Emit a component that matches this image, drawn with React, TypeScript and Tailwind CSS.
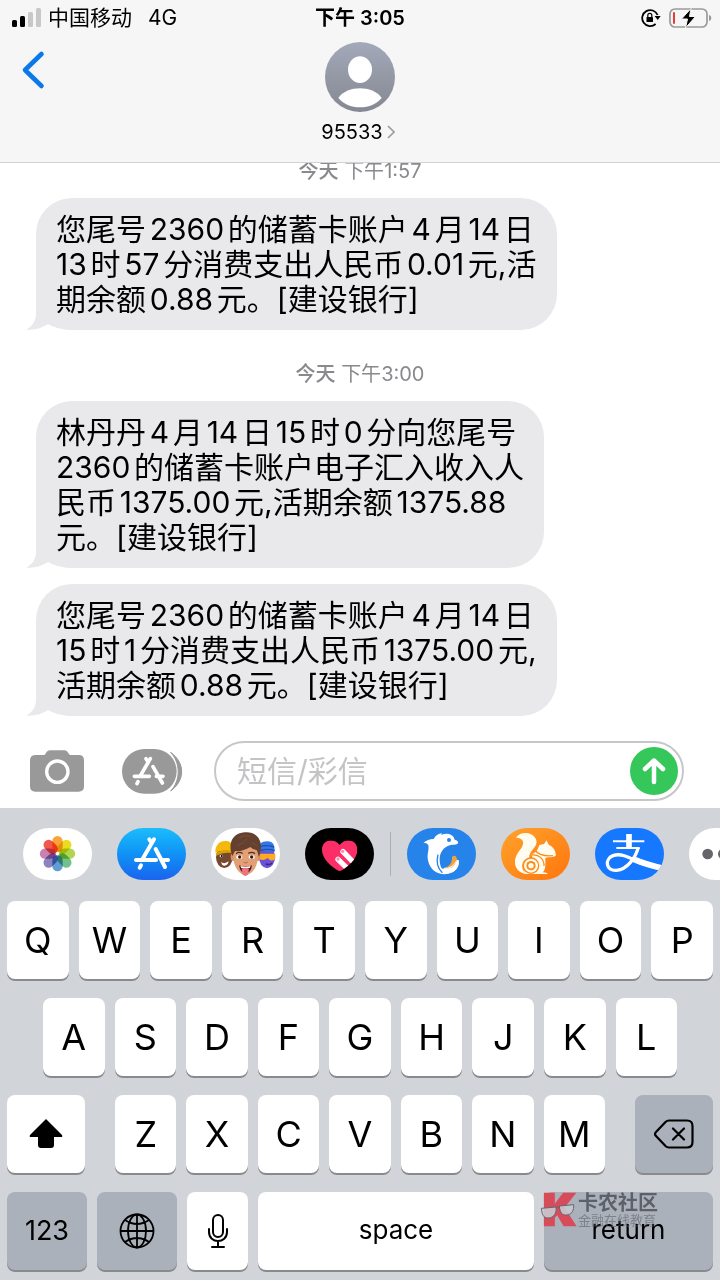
import { ReactNode } from "react";
import clsx from "clsx";

const messages = [
    {
        time: "1:57",
        bubbles: ["您尾号2360的储蓄卡账户4月14日\n13时57分消费支出人民币0.01元,活\n期余额0.88元。[建设银行]"],
    },
    {
        time: "3:00",
        bubbles: [
            "林丹丹4月14日15时0分向您尾号\n2360的储蓄卡账户电子汇入收入人\n民币1375.00元,活期余额1375.88\n元。[建设银行]",
            "您尾号2360的储蓄卡账户4月14日\n15时1分消费支出人民币1375.00元,\n活期余额0.88元。[建设银行]",
        ],
    },
];

const petals = ["#f7981d", "#e8d800", "#a5cf3a", "#5fb87a", "#4a8fd0", "#7a72b8", "#c070a8", "#ee4136"];

function StatusBar() {
    return (
        <div className="grid grid-cols-3 items-center h-9 px-3 text-xl leading-9">
            <div className="flex items-center whitespace-nowrap text-[21px]">
                <svg className="w-[30px] h-5 mr-1.5" viewBox="0 0 30 20" aria-hidden="true">
                    <rect x="0" y="12" width="5" height="7" rx="1.5" />
                    <rect x="8" y="8" width="5" height="11" rx="1.5" />
                    <rect x="16" y="4" width="5" height="15" rx="1.5" fill="#c8c8c8" />
                    <rect x="24" y="0" width="5" height="19" rx="1.5" fill="#c8c8c8" />
                </svg>
                <span>中国移动</span>
                <span className="ml-4">4G</span>
            </div>
            <div className="text-center font-semibold">下午 3:05</div>
            <div className="flex items-center justify-end gap-2">
                <svg className="w-5 h-5" viewBox="0 0 20 20" fill="none" stroke="#000" strokeWidth="1.8" aria-hidden="true">
                    <path d="M16.6 7A8 8 0 1 0 14.6 16" />
                    <path d="M13.6 8h6l-2.800 4z" fill="#000" stroke="none" />
                    <rect x="5.5" y="9" width="6.5" height="5" rx="0.6" fill="#000" stroke="none" />
                    <path d="M6.800 9V7.400a2 2 0 0 1 4 0V9" strokeWidth="1.200" />
                </svg>
                <svg className="w-[43px] h-5 -mr-1" viewBox="0 0 43 20" aria-hidden="true">
                    <rect x="1" y="1" width="37" height="18" rx="5" fill="none" stroke="#9a9a9c" strokeWidth="1.7" />
                    <rect x="4" y="4" width="2" height="12" rx="1" fill="#ea3b34" />
                    <path d="M40 7c3 .5 3 5.500 0 6z" fill="#9a9a9c" />
                    <path d="M22 0.500 12.500 11h6L16.500 20 26.500 8.500h-6z" fill="#000" stroke="#f6f6f6" strokeWidth="1" />
                </svg>
            </div>
        </div>
    );
}

function Header() {
    return (
        <header className="relative z-10 bg-[#f6f6f6] border-b border-[#d2d2d4]">
            <StatusBar />
            <div className="grid grid-cols-3 items-start h-[126px] px-5 pt-1.5">
                <button type="button" aria-label="Back" className="w-10 pt-2">
                    <svg className="w-7 h-10" viewBox="0 0 28 40" fill="none" stroke="#0b79ea" strokeWidth="4.600" strokeLinecap="round" strokeLinejoin="round">
                        <path d="M21.500 4 5 20 21.500 36" />
                    </svg>
                </button>
                <button type="button" className="flex flex-col items-center">
                    <svg className="w-[70px] h-[70px]" viewBox="0 0 210 210" aria-hidden="true">
                        <defs>
                            <linearGradient id="avatar" x1="0" y1="0" x2="0" y2="1">
                                <stop offset="0" stopColor="#a3a9b9" />
                                <stop offset="1" stopColor="#858892" />
                            </linearGradient>
                        </defs>
                        <circle cx="105" cy="105" r="105" fill="url(#avatar)" />
                        <ellipse cx="105" cy="83" rx="36" ry="40" fill="#fff" />
                        <path d="M40 168C54 148 80 139 105 139s51 9 65 29c-15 18-38 28-65 28s-50-10-65-28z" fill="#fff" />
                    </svg>
                    <span className="flex items-center gap-1 mt-2 pr-1 text-xl leading-6">
                        95533
                        <svg className="w-2 h-4" viewBox="0 0 8 16" fill="none" stroke="#9a9ba3" strokeWidth="1.600">
                            <path d="M1 2l6 6-6 6" />
                        </svg>
                    </span>
                </button>
            </div>
        </header>
    );
}

function Bubble({ text }: { text: string }) {
    return (
        <div className="relative ml-9 w-fit rounded-[36px] bg-[#e9e9eb] px-5 pt-[14px] pb-[13px] text-3xl leading-[35px] whitespace-pre [text-autospace:normal]">
            <svg className="absolute -left-2.5 bottom-0 w-12 h-10" viewBox="0 0 48 40" fill="#e9e9eb" aria-hidden="true">
                <path d="M10 0V24C10 31 6 37 0 39.500 8 40.500 16 38 22 34Q30 39 44 40H48V0z" />
            </svg>
            <p className="relative">{text}</p>
        </div>
    );
}

function Composer() {
    return (
        <form className="flex items-center pl-[30px] pr-9 pt-6 pb-[7px]" onSubmit={(e) => e.preventDefault()}>
            <button type="button" aria-label="Camera" className="shrink-0">
                <svg className="w-[54px] h-[42px]" viewBox="0 0 162 126">
                    <path d="M18 15H42C48 15 48 1 60 1H104C114 1 115 15 122 15H146Q162 15 162 31V109Q162 125 146 125H16Q0 125 0 109V31Q0 15 18 15z" fill="#999" />
                    <circle cx="82" cy="65" r="32" fill="none" stroke="#fff" strokeWidth="10" />
                </svg>
            </button>
            <button type="button" aria-label="Apps" className="shrink-0 ml-[38px]">
                <svg className="w-[62px] h-[45px]" viewBox="0 0 186 135">
                    <rect x="0" y="0" width="164" height="134" rx="67" fill="#999" />
                    <path d="M146 10C190 42 190 94 146 126C176 94 176 42 146 10z" fill="#999" stroke="#999" strokeWidth="3" />
                    <g fill="none" stroke="#fff" strokeWidth="11" strokeLinecap="round">
                        <path d="M85 29 54 82M72 29l6 9M93 53l28 49M37 82h45M103 82h20M48 98l-3 6" />
                    </g>
                </svg>
            </button>
            <div className="flex flex-1 min-w-0 items-center ml-[30px] h-[60px] rounded-full border-2 border-[#c7c7c9] pl-[21px] pr-1">
                <input
                    type="text"
                    aria-label="短信/彩信"
                    placeholder="短信/彩信"
                    className="flex-1 min-w-0 bg-transparent text-3xl leading-9 outline-none placeholder:text-[#c4c4c6]"
                />
                <button type="submit" aria-label="Send" className="flex shrink-0 items-center justify-center w-12 h-12 rounded-full bg-[#35c759]">
                    <svg className="w-6 h-7" viewBox="0 0 24 28" fill="none" stroke="#fff" strokeWidth="4.500" strokeLinecap="round" strokeLinejoin="round">
                        <path d="M12 25V3.500M3 12l9-8.500 9 8.500" />
                    </svg>
                </button>
            </div>
        </form>
    );
}

function AppIcon({ label, className, children }: { label: string; className: string; children: ReactNode }) {
    return (
        <button type="button" aria-label={label} className={clsx("shrink-0 w-[69px] h-[52px] rounded-[26px] overflow-hidden", className)}>
            <svg className="w-full h-full" viewBox="0 0 207 156">{children}</svg>
        </button>
    );
}

function AppStrip() {
    return (
        <div className="flex items-center gap-[25px] pl-[23px] pt-5 pb-[21px] overflow-hidden">
            <AppIcon label="Photos" className="bg-white">
                {petals.map((color, i) => (
                    <rect key={color} x="88" y="24" width="31" height="48" rx="15.500" fill={color} opacity="0.88" className="mix-blend-multiply" transform={`rotate(${i * 45} 103.500 77)`} />
                ))}
            </AppIcon>
            <AppIcon label="App Store" className="bg-linear-to-b from-[#1cbdfb] to-[#1b63ee]">
                <g fill="none" stroke="#fff" strokeWidth="12" strokeLinecap="round">
                    <path d="M111 34 75 96M97 34l8 11M116 63l28 54M57 96h60M136 96h17M72 112l-4 7" />
                </g>
            </AppIcon>
            <AppIcon label="Memoji" className="bg-white">
                <ellipse cx="40" cy="88" rx="25" ry="32" fill="#75482f" />
                <path d="M13 73C12 52 26 37 46 39c16 1 23 15 22 31-20-3-36-3-55 3z" fill="#f4b80e" />
                <path d="M14 75q24-13 53-6v7q-30-5-51 7z" fill="#dda000" />
                <ellipse cx="31" cy="84" rx="5" ry="4" fill="#fff" /><circle cx="32" cy="84" r="3" />
                <path d="M30 103q12 6 23-3-3 14-14 13-7-1-9-10z" fill="#fff" />
                <ellipse cx="168" cy="88" rx="24" ry="33" fill="#6d51d4" />
                <path d="M143 67c-2-18 8-27 26-27s24 14 21 32z" fill="#3378e8" />
                <path d="M145 57q20-8 44 0M148 68q20-8 43 0" fill="none" stroke="#214eb2" strokeWidth="4" />
                <path d="M144 77h49v13q-5 10-15 7l-9-7q-11 11-25 2z" fill="#ffab22" />
                <path d="M164 108q12 4 20-3" stroke="#3a258d" strokeWidth="4" fill="none" />
                <ellipse cx="66" cy="87" rx="7" ry="12" fill="#d89067" />
                <ellipse cx="141" cy="87" rx="7" ry="12" fill="#d89067" />
                <path d="M67 59c0-24 71-27 73 0v37c-3 24-20 45-36 45S71 120 68 98z" fill="#e3a077" />
                <path d="M64 84C48 43 68 15 101 13c40-4 60 30 43 73l-7-20q-14-2-19-9-25 15-46 12z" fill="#65402e" />
                <path d="M78 54Q97 46 108 32M121 44q12 3 17 11M84 30q14-10 34-6" stroke="#79503e" strokeWidth="3" fill="none" />
                <path d="M75 77q9-7 20-1M112 76q10-6 20 1" stroke="#55301f" strokeWidth="4" fill="none" />
                <ellipse cx="85" cy="87" rx="9" ry="6" fill="#fff" /><ellipse cx="122" cy="87" rx="9" ry="6" fill="#fff" />
                <circle cx="86" cy="87" r="5" fill="#321b13" /><circle cx="122" cy="87" r="5" fill="#321b13" />
                <path d="M98 102q6 5 12 0" stroke="#bd7652" strokeWidth="4" fill="none" />
                <path d="M84 112q20 7 39 0-3 24-20 24-15-1-19-24z" fill="#541b1a" />
                <path d="M88 114q16 5 31 0l-3 6H91z" fill="#fff" />
                <path d="M92 122q11-6 22 0l-3 17q-8 10-16 0z" fill="#ed7280" />
            </AppIcon>
            <AppIcon label="Digital Touch" className="bg-black">
                <clipPath id="heart">
                    <path d="M104 130C80 117 51 94 51 65c0-30 36-36 53-14 17-22 53-16 53 14 0 29-29 52-53 65z" />
                </clipPath>
                <g clipPath="url(#heart)">
                    <path d="M45 30h120v105H45z" fill="#fb2e68" />
                    <path d="M114 71 150 108M99 94l40 39" stroke="#fff" strokeWidth="16" strokeLinecap="round" />
                    <circle cx="113" cy="70" r="5" fill="#f890ac" />
                    <circle cx="99" cy="93" r="5" fill="#f890ac" />
                </g>
            </AppIcon>
            <div className="shrink-0 w-px h-11 -mx-[9px] bg-[#aeb0b5]" />
            <AppIcon label="Ctrip" className="bg-[#2583e9]">
                <path d="M49 46c8-10 20-13 31-13 5-10 13-16 26-17l-4 5c22-9 38 0 41 14 8 2 12 6 10 11-4 6-15 3-25 6-20 6-31 24-30 46 1 19 9 31 22 37 17-2 29-12 31-28 5-4 4-9 0-16 8 15 3 33-14 42-29 14-67 2-74-36-4-19 4-31 1-45-4-7-9-8-15-6z" fill="#fff" />
                <path d="M93 80c-6 23-1 41 13 54" fill="none" stroke="#2583e9" strokeWidth="4" />
                <path d="M155 96c5 22-14 42-43 40l-9-14c22 0 34-10 37-27z" fill="#fff" />
                <path d="M135 87q6-7 13 0 4 5 0 14c-6 16-19 22-37 20 15-6 25-14 24-34z" fill="#f1a13d" />
                <path d="M111 121q24 2 37-21" fill="none" stroke="#fff" strokeWidth="3" />
                <circle cx="126" cy="36" r="6" fill="#2583e9" />
            </AppIcon>
            <AppIcon label="UC" className="bg-linear-to-br from-[#ffa22a] to-[#ff750d]">
                <path d="M45 29c10-19 46-19 58 1 15 26-20 34-18 60-19 3-24 18-20 33q3 10 11 15C43 134 30 99 55 68c18-21 15-38-10-39z" fill="#fffdf0" />
                <path d="M91 79c13-3 19-13 24-28l14-3 8-11q3 10 7 14c14 6 19 17 21 31-10 9-21 4-32 8 0 20 2 34-8 43q13 0 15 5H73c-10-18-3-40 17-41 22 0 29 21 20 36" fill="#fffdf0" />
                <path d="M101 66q15 20 55 17M91 81c24-4 39 14 38 33" fill="none" stroke="#ff8b1a" strokeWidth="4" />
                <circle cx="90" cy="113" r="25" fill="#ff8b1a" />
                <circle cx="90" cy="113" r="21" fill="#fffdf0" />
                <circle cx="90" cy="113" r="14" fill="#ff8b1a" />
                <circle cx="90" cy="113" r="8" fill="#fffdf0" />
            </AppIcon>
            <AppIcon label="Alipay" className="bg-[#1677ff]">
                <g fill="none" stroke="#fff">
                    <path d="M102 18v42" strokeWidth="17" />
                    <path d="M54 40h94M64 60h70" strokeWidth="6" />
                    <path d="M130 58C121 91 96 124 65 127 32 130 28 93 54 83c27-10 56 10 82 22" strokeWidth="10" />
                    <path d="M116 94Q156 111 204 121" strokeWidth="18" />
                </g>
            </AppIcon>
            <AppIcon label="More" className="bg-white">
                <g fill="#646569"><circle cx="56" cy="78" r="16" /><circle cx="103" cy="78" r="16" /><circle cx="150" cy="78" r="16" /></g>
            </AppIcon>
        </div>
    );
}

function Key({ children, label, dark, className }: { children: ReactNode; label?: string; dark?: boolean; className?: string }) {
    return (
        <button
            type="button"
            aria-label={label}
            className={clsx(
                "flex items-center justify-center min-w-0 h-[78px] rounded-lg shadow-[0_2px_0_#898a8d]",
                dark ? "bg-[#abb1bb]" : "bg-white",
                className ?? "flex-1 text-4xl"
            )}
        >
            {children}
        </button>
    );
}

function Letters({ keys }: { keys: string }) {
    return keys.split("").map((letter) => <Key key={letter}>{letter}</Key>);
}

function Watermark() {
    return (
        <div className="absolute -left-1 top-0 flex items-start pointer-events-none whitespace-nowrap text-[#5d6068]">
            <svg className="w-9 h-9 overflow-visible" viewBox="0 0 108 108" aria-hidden="true">
                <text x="10" y="98" fontSize="126" fontWeight="900" fill="#d84b5b" stroke="#d84b5b" strokeWidth="8" fontFamily="Inter, sans-serif">K</text>
                <g fill="#c6cad0" fillOpacity="0.9" stroke="#63666d" strokeWidth="3">
                    <path d="M4 49 48 45c3 17-6 32-22 33S6 68 4 49z" />
                    <path d="M58 42l43-4c1 17-5 29-20 31S59 60 58 42z" />
                    <path d="M48 48q5-5 10-3" fill="none" />
                </g>
            </svg>
            <div className="flex flex-col pl-0.5">
                <span className="text-xl leading-[22px] font-bold">卡农社区</span>
                <span className="text-[13px] leading-3 opacity-60">金融在线教育</span>
            </div>
        </div>
    );
}

function Keyboard() {
    return (
        <section aria-label="Keyboard" className="bg-[#d1d4d9] pb-2.5">
            <AppStrip />
            <div className="flex flex-col gap-[19px] px-[7px]">
                <div className="flex gap-2.5"><Letters keys="QWERTYUIOP" /></div>
                <div className="flex gap-2.5 px-9"><Letters keys="ASDFGHJKL" /></div>
                <div className="flex gap-[30px]">
                    <Key label="Shift" className="w-[78px]">
                        <svg className="w-9 h-8" viewBox="0 0 36 32"><path d="M18 1 2 17q-1 2 1 2h7v8q0 3 3 3h10q3 0 3-3v-8h7q2 0 1-2z" /></svg>
                    </Key>
                    <div className="flex flex-1 gap-2.5"><Letters keys="ZXCVBNM" /></div>
                    <Key label="Delete" dark className="w-[78px]">
                        <svg className="w-10 h-[30px]" viewBox="0 0 40 30" fill="none" stroke="#000" strokeWidth="2.200" strokeLinecap="round" strokeLinejoin="round">
                            <path d="M15 1.500h18q5.500 0 5.500 5.500v16q0 5.500-5.500 5.500H15q-2 0-3.500-1.500L2 17q-2-2 0-4l9.500-10Q13 1.500 15 1.500zM19 9.500l11 11M30 9.500l-11 11" />
                        </svg>
                    </Key>
                </div>
                <div className="flex gap-2.5">
                    <Key dark className="flex-[80] text-[27px]">123</Key>
                    <Key dark label="Next keyboard" className="flex-[80]">
                        <svg className="w-9 h-9" viewBox="0 0 36 36" fill="none" stroke="#000" strokeWidth="1.800">
                            <circle cx="18" cy="18" r="16.500" />
                            <ellipse cx="18" cy="18" rx="9" ry="16.500" />
                            <path d="M18 1.500v33M1.500 18h33M6 7q12 8 24 0M6 29q12-8 24 0" />
                        </svg>
                    </Key>
                    <Key label="Dictate" className="flex-[61]">
                        <svg className="w-5 h-[34px]" viewBox="0 0 20 34" fill="none" stroke="#000" strokeWidth="2" strokeLinecap="round">
                            <rect x="5" y="1" width="10" height="22" rx="5" />
                            <path d="M1 15v3c0 12 18 12 18 0v-3M10 27v6M4 33h12" />
                        </svg>
                    </Key>
                    <Key className="flex-[276] pb-1 text-[26px]">space</Key>
                    <div className="relative flex flex-[169]">
                        <Key dark className="flex-1 pb-1 text-[26px]">return</Key>
                        <Watermark />
                    </div>
                </div>
            </div>
        </section>
    );
}

export default function App() {
    return (
        <div className="flex flex-col min-h-screen overflow-hidden bg-white text-black font-[Inter,'Noto_Sans_CJK_SC',sans-serif]">
            <Header />
            <main className="flex-1 -mt-0.5">
                {messages.map((group) => (
                    <section key={group.time} className="mb-[34px] last:mb-0">
                        <p className="mb-[17px] text-center text-xl leading-5 text-[#8a8a8e]">
                            <span className="font-medium">今天</span> 下午{group.time}
                        </p>
                        <div className="flex flex-col gap-4">
                            {group.bubbles.map((text) => <Bubble key={text} text={text} />)}
                        </div>
                    </section>
                ))}
            </main>
            <Composer />
            <Keyboard />
        </div>
    );
}
